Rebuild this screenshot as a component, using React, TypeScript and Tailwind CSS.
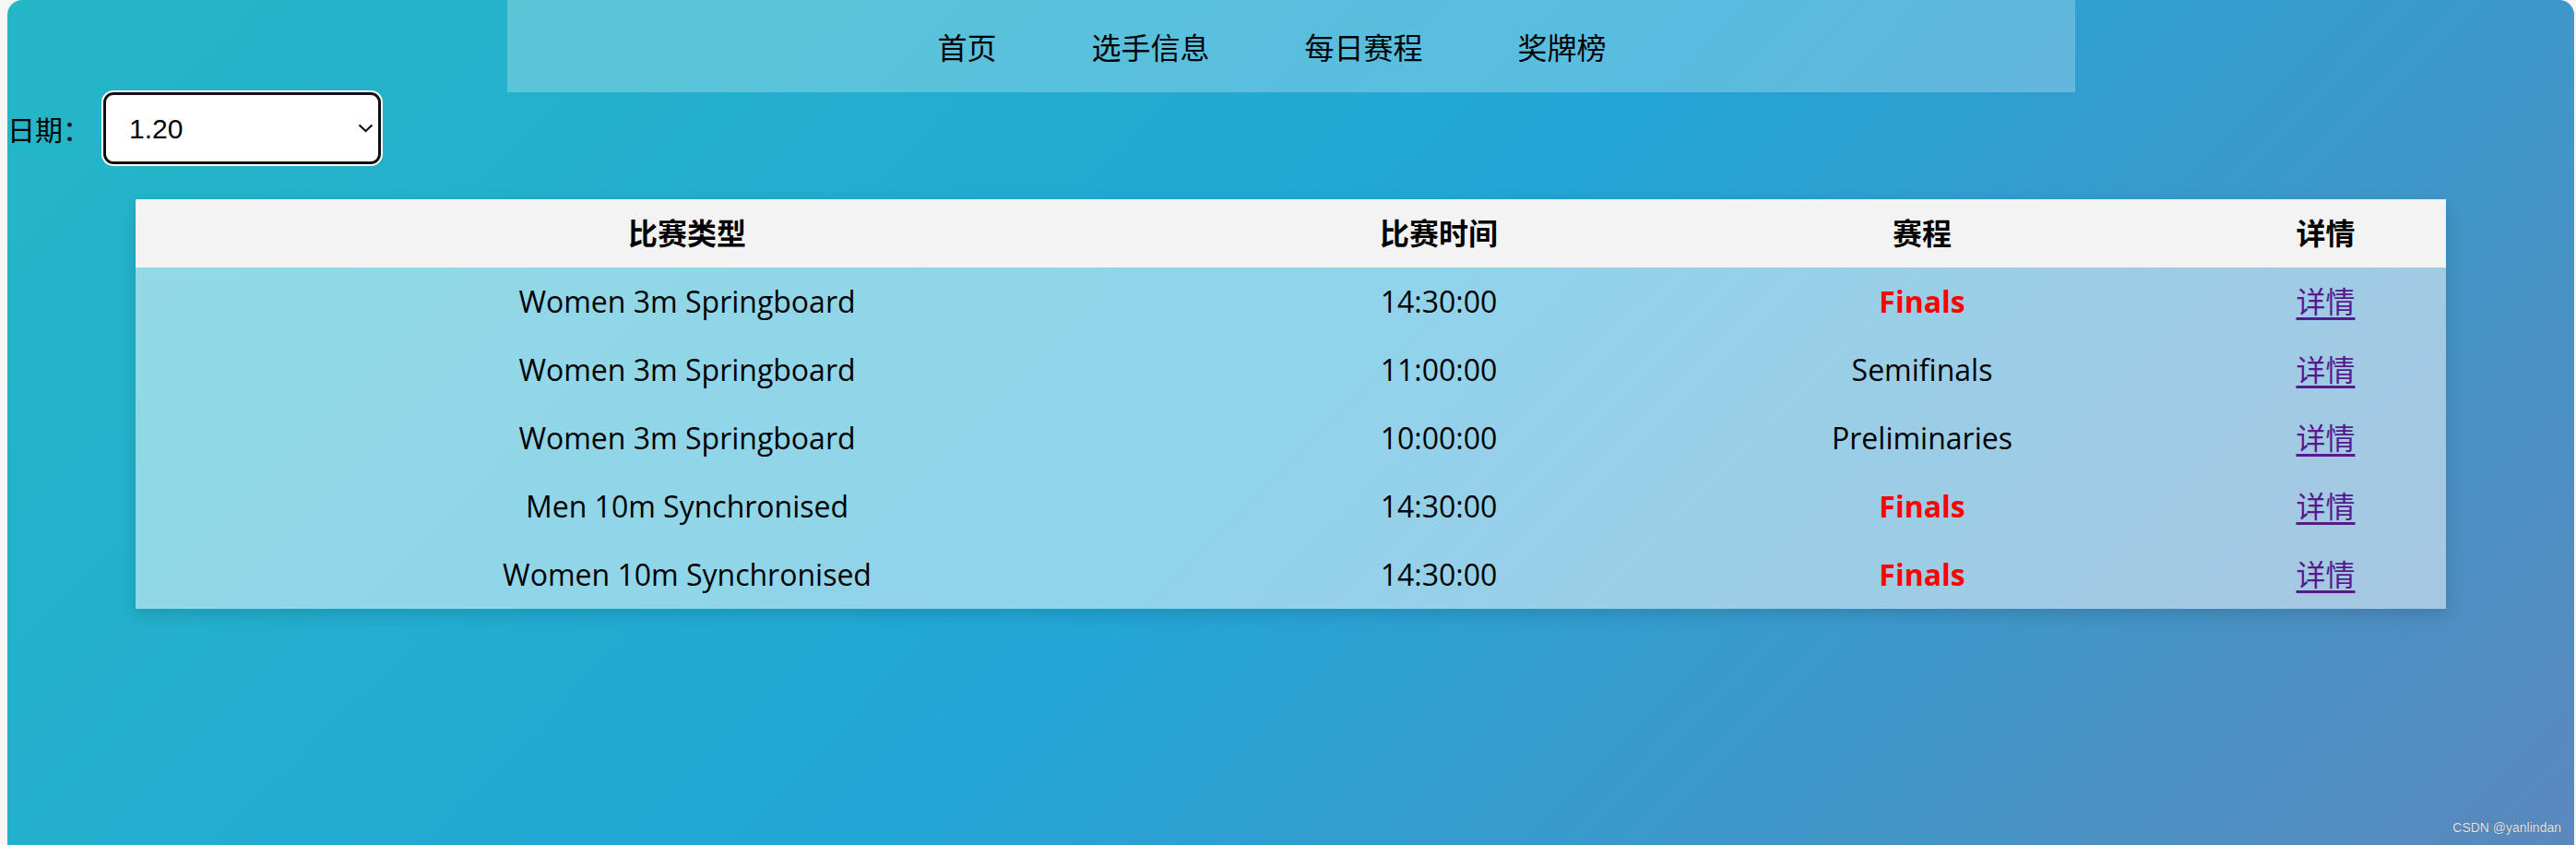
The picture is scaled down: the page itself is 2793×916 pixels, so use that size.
import React, { useState } from 'react';

type Match = {
  type: string;
  time: string;
  stage: string;
};

const matches: Match[] = [
  { type: 'Women 3m Springboard', time: '14:30:00', stage: 'Finals' },
  { type: 'Women 3m Springboard', time: '11:00:00', stage: 'Semifinals' },
  { type: 'Women 3m Springboard', time: '10:00:00', stage: 'Preliminaries' },
  { type: 'Men 10m Synchronised', time: '14:30:00', stage: 'Finals' },
  { type: 'Women 10m Synchronised', time: '14:30:00', stage: 'Finals' },
];

const navItems = ['首页', '选手信息', '每日赛程', '奖牌榜'];

const App: React.FC = () => {
  const [date, setDate] = useState('1.20');

  return (
    <div className="w-full h-screen bg-[#f6f6f6] overflow-hidden">
      <div className="relative ml-[8px] mr-[2px] h-full rounded-t-[16px] bg-[linear-gradient(135deg,#24b7c6_0%,#22a6d6_50%,#5a88bd_100%)] font-['Open_Sans','Noto_Sans_CJK_SC',sans-serif] text-black">
        {/* top nav */}
        <nav className="mx-auto w-[1700px] h-[100px] bg-white/25 flex items-center pl-[467px]">
          <ul className="flex items-center gap-[103px] text-[32px] font-['Noto_Sans_CJK_SC',sans-serif] leading-none">
            {navItems.map((n) => (
              <li key={n} className="cursor-pointer">{n}</li>
            ))}
          </ul>
        </nav>

        {/* date picker */}
        <div className="flex items-center h-[78px]">
          <span className="text-[30px] font-['Noto_Sans_CJK_SC',sans-serif] leading-none">日期：</span>
          <div className="relative ml-[14px] w-[301px] h-[78px] rounded-[11px] bg-white shadow-[0_0_0_2px_#ffffff]">
            <select
              value={date}
              onChange={(e) => setDate(e.target.value)}
              className="appearance-none w-full h-full rounded-[11px] border-[3px] border-[#111] bg-white pl-[25px] text-[30px] font-['Liberation_Sans',Arial,sans-serif] outline-none"
            >
              <option value="1.20">1.20</option>
              <option value="1.21">1.21</option>
              <option value="1.22">1.22</option>
            </select>
            <svg
              className="absolute right-[8px] top-[34px] pointer-events-none"
              width="17"
              height="10"
              viewBox="0 0 17 10"
            >
              <path d="M1.5 1.5 L8.5 8 L15.5 1.5" fill="none" stroke="#111" strokeWidth="2.2" />
            </svg>
          </div>
        </div>

        {/* schedule table */}
        <table className="mt-[38px] mx-auto w-[90%] table-fixed border-collapse shadow-[0_6px_16px_rgba(0,0,0,0.14)] text-[32px]">
          <colgroup>
            <col className="w-[1196px]" />
            <col className="w-[434px]" />
            <col className="w-[614px]" />
            <col className="w-[261px]" />
          </colgroup>
          <thead>
            <tr className="bg-[#f3f3f3] h-[74px]">
              <th className="font-bold">比赛类型</th>
              <th className="font-bold">比赛时间</th>
              <th className="font-bold">赛程</th>
              <th className="font-bold">详情</th>
            </tr>
          </thead>
          <tbody>
            {matches.map((m, i) => (
              <tr key={i} className="bg-white/50 h-[74px] text-center">
                <td>{m.type}</td>
                <td>{m.time}</td>
                <td className={m.stage === 'Finals' ? 'text-[#ff0000] font-bold' : ''}>{m.stage}</td>
                <td>
                  <a href="#" className="text-[#551a8b] underline decoration-[3px] underline-offset-[5px]">
                    详情
                  </a>
                </td>
              </tr>
            ))}
          </tbody>
        </table>

        <span className="absolute right-[14px] bottom-[8px] text-[14px] text-[#e4e4e4] font-['Liberation_Sans',Arial,sans-serif] [text-shadow:0_0_1px_rgba(0,0,0,0.4)]">
          CSDN @yanlindan
        </span>
      </div>
    </div>
  );
};

export default App;
